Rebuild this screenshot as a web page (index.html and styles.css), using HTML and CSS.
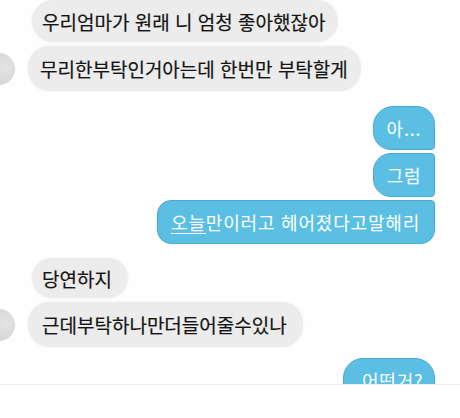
FILE: index.html
```html
<!DOCTYPE html>
<html lang="ko">
<head>
<meta charset="utf-8">
<link rel="stylesheet" href="styles.css">
</head>
<body>
<div class="screen">
  <div class="chat">
    <div class="row in first"><div class="bubble gray b1">우리엄마가 원래 니 엄청 좋아했잖아</div></div>
    <div class="row in"><div class="avatar"></div><div class="bubble gray b2">무리한부탁인거아는데 한번만 부탁할게</div></div>
    <div class="row out o1"><div class="bubble blue top short">아...</div></div>
    <div class="row out"><div class="bubble blue mid short">그럼</div></div>
    <div class="row out"><div class="bubble blue bottom long"><span class="ul">오늘</span>만이러고 헤어졌다고말해리</div></div>
    <div class="row in first g3"><div class="bubble gray b3">당연하지</div></div>
    <div class="row in"><div class="avatar"></div><div class="bubble gray b4">근데부탁하나만더들어줄수있나</div></div>
    <div class="row out o4"><div class="bubble blue single last">어떤거?</div></div>
  </div>
  <div class="inputbar">
    <div class="faint"></div>
  </div>
</div>
</body>
</html>
```
FILE: styles.css
```css
html, body {
  margin: 0;
  padding: 0;
  background: #ffffff;
}
.screen {
  width: 460px;
  height: 418px;
  display: flex;
  flex-direction: column;
  overflow: hidden;
  font-family: "Noto Sans CJK KR", "Noto Sans", sans-serif;
}
.chat {
  height: 384px;
  overflow: hidden;
  display: flex;
  flex-direction: column;
  background: #fefefe;
}
.row {
  display: flex;
  align-items: center;
}
.row.in {
  justify-content: flex-start;
  margin-top: 4px;
}
.row.in.first {
  margin-top: 0;
  padding-left: 32px;
}
.row.out {
  justify-content: flex-end;
  padding-right: 25px;
  margin-top: 3px;
}
.row.out.o1 { margin-top: 15px; }
.row.in.g3 { margin-top: 14px; }
.row.out.o4 { margin-top: 11px; }

.avatar {
  width: 32px;
  height: 32px;
  margin-left: -17px;
  margin-right: 13px;
  border-radius: 50%;
  background: radial-gradient(circle at 70% 45%, #e4e4e4 0%, #d4d4d4 70%, #cfcfcf 100%);
}
.bubble {
  display: flex;
  align-items: center;
  box-sizing: border-box;
  font-size: 19px;
  white-space: nowrap;
}
.gray {
  background: #ececec;
  color: #141414;
  height: 43px;
  padding: 0 13px 0 10px;
  border-radius: 21px;
  box-shadow: 0 0 3px rgba(0,0,0,0.06);
  -webkit-text-stroke: 0.2px #141414;
}
.b1 { height: 42px; }
.b2 { padding-left: 12px; height: 45px; }
.b3 { height: 40px; padding-right: 16px; }
.b4 { padding-left: 14px; height: 45px; padding-right: 16px; }

.blue {
  background: #5bbfe4;
  border: 1px solid #4aa9d2;
  color: #ffffff;
  height: 44px;
  padding: 0 13px;
  font-size: 18px;
  letter-spacing: 0.8px;
}
.short {
  width: 62px;
  justify-content: center;
}
.top { border-radius: 20px 18px 4px 18px; }
.mid { border-radius: 18px 4px 4px 18px; }
.bottom { border-radius: 14px 4px 14px 14px; }
.long { padding-left: 13px; padding-right: 14px; }
.single {
  border-radius: 20px 20px 4px 20px;
  height: 44px;
  padding: 0 12px 0 18px;
  width: 92px;
}
.ul {
  text-decoration: underline;
  text-underline-offset: 3px;
}
.inputbar {
  flex: 1;
  background: #ffffff;
  border-top: 1px solid #ececec;
  padding: 8px 20px 0;
}
.faint {
  height: 1px;
  margin: 2px 40px 0 380px;
  background: #f0f0f0;
}
```
